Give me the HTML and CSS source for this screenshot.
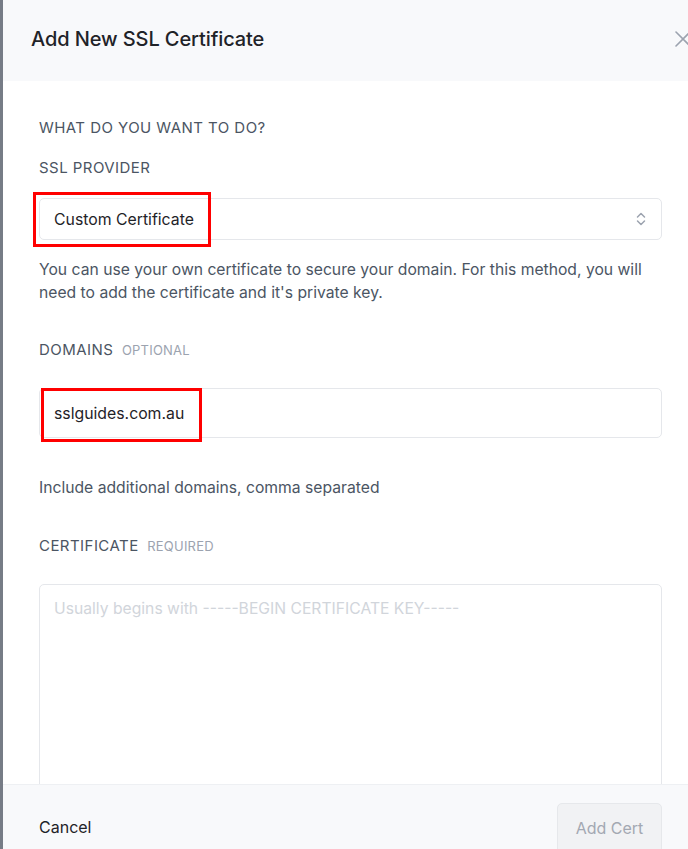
FILE: index.html
```html
<!DOCTYPE html>
<html>
<head>
<meta charset="utf-8">
<link rel="stylesheet" href="styles.css">
</head>
<body>
<div class="page">
  <div class="backdrop-strip"></div>
  <div class="modal">
    <header class="modal-header">
      <h1 class="modal-title">Add New SSL Certificate</h1>
      <button class="close-btn" aria-label="Close">
        <svg width="18" height="18" viewBox="0 0 18 18"><path d="M2 2L16 16M16 2L2 16" stroke="#9ca3af" stroke-width="1.6" fill="none" stroke-linecap="round"/></svg>
      </button>
    </header>
    <main class="modal-body">
      <div class="section-title">WHAT DO YOU WANT TO DO?</div>
      <div class="label">SSL PROVIDER</div>
      <div class="select">
        <span class="select-value highlight hl-select">Custom Certificate</span>
        <svg class="chevrons" width="10" height="16" viewBox="0 0 10 16"><path d="M1.5 6L5 2.5L8.5 6M1.5 10L5 13.5L8.5 10" stroke="#9ca3af" stroke-width="1.5" fill="none" stroke-linecap="round" stroke-linejoin="round"/></svg>
      </div>
      <p class="help">You can use your own certificate to secure your domain. For this method, you will need to add the certificate and it's private key.</p>

      <div class="label label-domains">DOMAINS <span class="tag">OPTIONAL</span></div>
      <div class="input">
        <span class="input-value highlight hl-input">sslguides.com.au</span>
      </div>
      <p class="help help-domains">Include additional domains, comma separated</p>

      <div class="label label-cert">CERTIFICATE <span class="tag">REQUIRED</span></div>
      <div class="textarea">
        <span class="placeholder">Usually begins with -----BEGIN CERTIFICATE KEY-----</span>
      </div>
    </main>
    <footer class="modal-footer">
      <button class="btn-cancel">Cancel</button>
      <button class="btn-add" disabled>Add Cert</button>
    </footer>
  </div>
</div>
</body>
</html>
```
FILE: styles.css
```css
* { box-sizing: border-box; }
html, body { margin: 0; padding: 0; height: 100%; }
body {
  font-family: Inter, "Noto Sans", sans-serif;
  background: #ffffff;
  color: #111827;
  overflow: hidden;
}
.page {
  display: flex;
  height: 849px;
  width: 688px;
}
.backdrop-strip {
  width: 3px;
  flex: none;
  background: #767c86;
}
.modal {
  flex: 1;
  display: flex;
  flex-direction: column;
  background: #fff;
  height: 849px;
  overflow: hidden;
}
.modal-header {
  height: 81px;
  flex: none;
  background: #f8f9fb;
  display: flex;
  align-items: center;
  justify-content: space-between;
  padding: 0 0 0 28px;
}
.modal-title {
  margin: 0;
  font-size: 20px;
  font-weight: 500;
  color: #1f2328;
  letter-spacing: -0.1px;
  position: relative;
  top: -2px;
}
.close-btn {
  background: none;
  border: none;
  padding: 0;
  margin-right: -6px;
  width: 20px;
  height: 20px;
  display: flex;
  align-items: center;
  justify-content: flex-start;
  position: relative;
  top: -2px;
}
.modal-body {
  flex: 1;
  overflow: hidden;
  padding: 37px 26px 0 36px;
}
.section-title, .label {
  font-size: 15px;
  color: #4b5563;
  line-height: 20px;
  letter-spacing: 0.45px;
}
.label { margin-top: 20px; }
.tag {
  font-size: 13px;
  color: #9ca3af;
  margin-left: 4px;
  letter-spacing: 0.2px;
}
.select, .input {
  border: 1px solid #e5e7eb;
  border-radius: 5px;
  display: flex;
  align-items: center;
  justify-content: space-between;
  padding: 0 14px;
  font-size: 15.8px;
  color: #1f2328;
}
.select {
  height: 42px;
  margin-top: 20px;
}
.chevrons { margin-right: 1px; }
.input {
  height: 50px;
  margin-top: 28px;
}
.highlight {
  position: relative;
}
.highlight::after {
  content: "";
  position: absolute;
  border: 3px solid #ff0000;
}
.hl-select::after { left: -21px; right: -17px; top: -18px; bottom: -18px; }
.hl-input::after { left: -13px; right: -18px; top: -16px; bottom: -19px; }
.help {
  margin: 0;
  font-size: 15.7px;
  line-height: 23px;
  color: #4b5563;
}
.select + .help { margin-top: 18px; }
.label-domains { margin-top: 36px; }
.help-domains { margin-top: 38px; }
.label-cert { margin-top: 37px; }
.textarea {
  margin-top: 28px;
  height: 260px;
  border: 1px solid #e5e7eb;
  border-radius: 5px;
  padding: 14px 14px;
  font-size: 15.7px;
}
.placeholder { color: #d1d5db; }
.modal-footer {
  height: 65px;
  flex: none;
  background: #f8f9fb;
  border-top: 1px solid #eef0f3;
  display: flex;
  align-items: flex-start;
  justify-content: space-between;
  padding: 18px 26px 0 36px;
}
.btn-cancel {
  background: none;
  border: none;
  padding: 0;
  margin-top: 14px;
  font-family: inherit;
  font-size: 16px;
  color: #1f2328;
}
.btn-add {
  font-family: inherit;
  font-size: 16px;
  color: #a3a8b2;
  background: #f1f2f4;
  border: 1px solid #e6e8eb;
  border-radius: 5px;
  width: 105px;
  height: 56px;
  padding: 0 0 7px;
}
```
